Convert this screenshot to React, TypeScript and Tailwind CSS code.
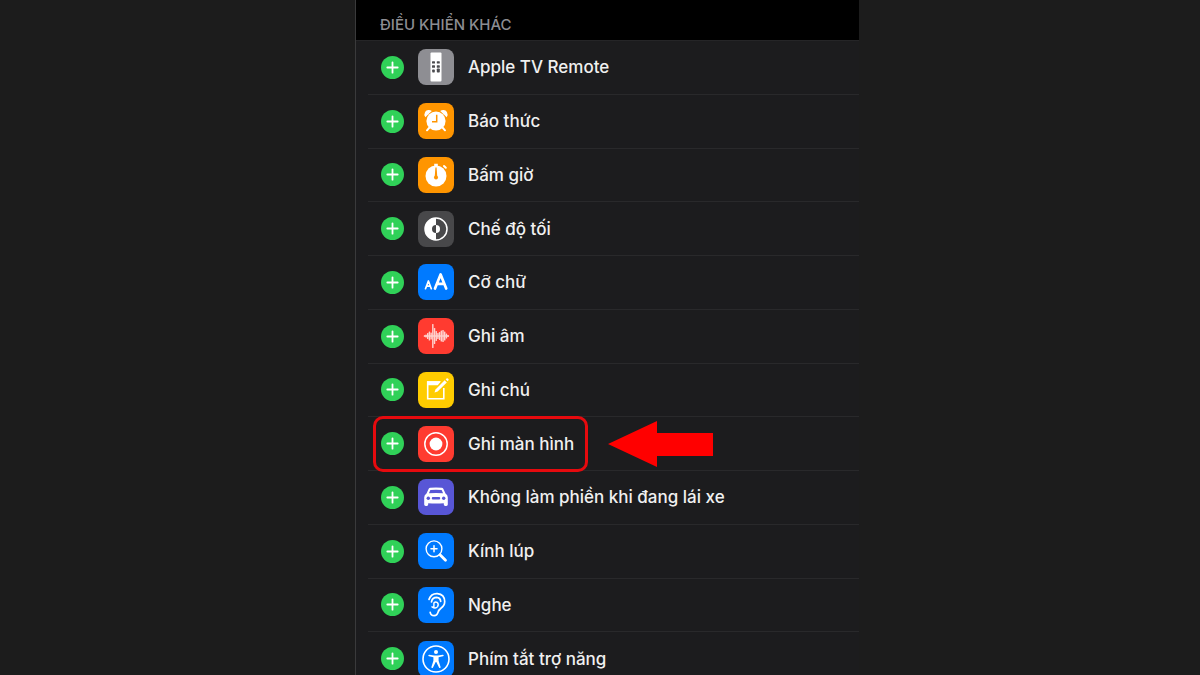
import type { ReactNode } from "react";

function RemoteIcon() {
  return (
    <>
      <rect x="12.500" y="3.500" width="11" height="29" rx="1" fill="#fff" />
      <g fill="#4b4b4f">
        <rect x="14" y="12.200" width="3" height="2.400" rx="0.6" />
        <rect x="18.800" y="12.200" width="3" height="2.400" rx="0.6" />
        <rect x="14" y="16.200" width="3" height="2.600" rx="0.6" />
        <rect x="18.800" y="16.200" width="3" height="2.600" rx="0.6" />
        <rect x="14.200" y="20.600" width="2.600" height="2.800" rx="0.6" />
        <rect x="18.800" y="19.400" width="3" height="4.200" rx="0.8" />
      </g>
    </>
  );
}

function AlarmIcon() {
  return (
    <>
      <g fill="#fff">
        <path d="M7.300 14.200a5 5 0 0 1-.2-5.300a4.400 4.400 0 0 1 6.700-.8z" />
        <path d="M28.700 14.200a5 5 0 0 0 .2-5.300a4.400 4.400 0 0 0-6.700-.8z" />
        <circle cx="18" cy="18" r="9.600" />
      </g>
      <path d="M11.500 24.500L9 27.300M24.500 24.500L27 27.300" stroke="#fff" strokeWidth="2" strokeLinecap="round" />
      <path d="M18.700 11.800V18.700H14" fill="none" stroke="#ff9500" strokeWidth="1.500" />
    </>
  );
}

function TimerIcon() {
  return (
    <>
      <circle cx="18" cy="19" r="10.500" fill="#fff" />
      <path d="M16.200 6.700h3.600v3h-3.600z" fill="#fff" />
      <path d="M26 9l1.800 1.800" stroke="#fff" strokeWidth="2" strokeLinecap="round" />
      <path d="M17.400 10.500h1.200l.7 9.500h-2.600z" fill="#ff9500" />
      <circle cx="18" cy="20.500" r="2" fill="#ff9500" />
    </>
  );
}

function DarkModeIcon() {
  return (
    <>
      <circle cx="18" cy="18" r="11" fill="none" stroke="#fff" strokeWidth="1.500" />
      <path d="M18 7a11 11 0 0 0 0 22v-7a4 4 0 0 1 0-8z" fill="#fff" />
      <path d="M18 14a4 4 0 0 1 0 8z" fill="#fff" />
    </>
  );
}

function TextSizeIcon() {
  return (
    <g fill="none" stroke="#fff" strokeLinejoin="round" strokeLinecap="round">
      <path d="M7.500 24.700l2.900-7.700l2.900 7.700M8.500 22.200h3.900" strokeWidth="1.700" />
      <path d="M17 24.500l5.600-14l5.600 14M18.900 19.900h7.400" strokeWidth="2.700" />
    </g>
  );
}

function VoiceIcon() {
  const bars = [1, 3, 6, 9, 7, 24, 16, 10, 6, 8, 11, 12, 9, 5, 2];
  return (
    <g fill="#ffd2ce">
      {bars.map((height, i) => (
        <rect key={i} x={5.600 + i * 1.700} y={18 - height / 2} width="1.450" height={height} rx="0.6" />
      ))}
      <rect x="6" y="17.300" width="24.500" height="1.400" />
    </g>
  );
}

function NotesIcon() {
  return (
    <>
      <path d="M25.800 16v10.700H9.700V10H22" fill="none" stroke="#fff" strokeWidth="1.600" />
      <path d="M9 9.300h14l-3.300 4H9z" fill="#fff" />
      <path d="M16.500 20.600l1-3.100l9.200-9.200l2.100 2.100l-9.200 9.200z" fill="#fff" />
      <path d="M27.700 7.300l.9-.9q.7-.5 1.600.3t.3 1.600l-.9.900z" fill="#fff" />
    </>
  );
}

function RecordIcon() {
  return (
    <>
      <circle cx="18" cy="18" r="11.200" fill="none" stroke="#fff" strokeWidth="1.500" />
      <circle cx="18" cy="18" r="6.400" fill="#fff" />
    </>
  );
}

function CarIcon() {
  return (
    <>
      <path
        fill="#fff"
        fillRule="evenodd"
        d="M10.700 9.700q.5-.8 1.500-.9q5.800-.6 11.600 0q1 .1 1.500.9l2.200 4.700q2.300 1.300 2.300 4v7.100q0 1.400-1.500 1.400h-1q-1.500 0-1.500-1.400v-1.300q-7.800.5-15.600 0v1.300q0 1.400-1.500 1.400h-1q-1.500 0-1.500-1.400v-7.100q0-2.700 2.300-4zM12.400 11l-1.500 3.300q7.100-.6 14.200 0L23.600 11q-5.600-.6-11.200 0z"
      />
      <g fill="#5856d6">
        <circle cx="10.300" cy="19.300" r="1.700" />
        <circle cx="25.700" cy="19.300" r="1.700" />
        <rect x="13.800" y="18" width="8.400" height="2.600" rx="1.100" />
      </g>
    </>
  );
}

function MagnifierIcon() {
  return (
    <g fill="none" stroke="#fff" strokeLinecap="round">
      <circle cx="16" cy="15.800" r="7.900" strokeWidth="1.400" />
      <path d="M16 12.800v6M13 15.800h6" strokeWidth="1.500" />
      <path d="M22 21.800l5.500 5.500" strokeWidth="2.800" />
    </g>
  );
}

function EarIcon() {
  return (
    <g fill="none" stroke="#fff" strokeWidth="1.700" strokeLinecap="round">
      <path d="M11 12.400q2.200-6.100 8.300-5.800q7.300.7 7.400 7.900q0 4-3.500 6.500q-2.600 1.900-3.300 4.600q-.8 3-3.700 3.100q-3.400 0-4-3.400" />
      <path d="M13.500 14.800q.8-4.400 5.200-4.400q3.600.2 4 4" />
      <path d="M14 19.800q3.500 2.300 5.600-.2q1.500-2.600-.6-4.300q-1.600-1-3.100.6v4.500" strokeWidth="1.400" />
    </g>
  );
}

function AccessibilityIcon() {
  return (
    <>
      <circle cx="18" cy="18" r="13" fill="none" stroke="#fff" strokeWidth="1.600" />
      <circle cx="18" cy="11" r="2" fill="#fff" />
      <path
        d="M11.200 13.800l5 .8h3.600l5-.8q.9 0 .9.700t-.7.800l-4.400 1v3.500l2 6.300q.1.900-.6 1t-1-.5L18.300 21h-.6L15 26.600q-.3.600-1 .5t-.6-1l2-6.300v-3.500l-4.400-1q-.7-.1-.7-.8t.9-.7z"
        fill="#fff"
      />
    </>
  );
}

type Control = { name: string; color: string; icon: ReactNode; highlighted?: boolean };

const controls: Control[] = [
  { name: "Apple TV Remote", color: "bg-[#8e8e93]", icon: <RemoteIcon /> },
  { name: "Báo thức", color: "bg-[#ff9500]", icon: <AlarmIcon /> },
  { name: "Bấm giờ", color: "bg-[#ff9500]", icon: <TimerIcon /> },
  { name: "Chế độ tối", color: "bg-[#48484a]", icon: <DarkModeIcon /> },
  { name: "Cỡ chữ", color: "bg-[#007aff]", icon: <TextSizeIcon /> },
  { name: "Ghi âm", color: "bg-[#ff3b30]", icon: <VoiceIcon /> },
  { name: "Ghi chú", color: "bg-[#ffcc00]", icon: <NotesIcon /> },
  { name: "Ghi màn hình", color: "bg-[#ff3b30]", icon: <RecordIcon />, highlighted: true },
  { name: "Không làm phiền khi đang lái xe", color: "bg-[#5856d6]", icon: <CarIcon /> },
  { name: "Kính lúp", color: "bg-[#007aff]", icon: <MagnifierIcon /> },
  { name: "Nghe", color: "bg-[#007aff]", icon: <EarIcon /> },
  { name: "Phím tắt trợ năng", color: "bg-[#007aff]", icon: <AccessibilityIcon /> },
];

function Callout() {
  return (
    <>
      <div className="pointer-events-none absolute -top-px -bottom-px left-[17px] w-[215px] rounded-[10px] border-3 border-[#e60a0e]" />
      <svg className="pointer-events-none absolute top-1 left-[252px] h-[46px] w-[105px]" viewBox="0 0 105 46" aria-hidden="true">
        <path d="M0 23L49 0V12H105V35H49V46Z" fill="#ff0000" />
      </svg>
    </>
  );
}

function ControlRow({ name, color, icon, highlighted }: Control) {
  const id = name.replace(/\s+/g, "-");
  return (
    <li className="relative flex flex-col pl-3">
      <div className="flex flex-1 items-center gap-3.5 border-b border-[#29292b] pl-[13px]">
        <button type="button" aria-labelledby={id} className="size-[23px] shrink-0 cursor-pointer rounded-full bg-[#30d158]">
          <svg viewBox="0 0 23 23" aria-hidden="true">
            <path d="M11.500 6.300v10.400M6.300 11.500h10.400" stroke="#fff" strokeWidth="1.800" strokeLinecap="round" />
          </svg>
        </button>
        <svg viewBox="0 0 36 36" className={`size-9 shrink-0 rounded-lg ${color}`} aria-hidden="true">
          {icon}
        </svg>
        <span id={id} className="text-[17px] leading-6 font-medium text-[#f0f0f0]">
          {name}
        </span>
      </div>
      {highlighted && <Callout />}
    </li>
  );
}

export default function App() {
  return (
    <div className="flex h-screen justify-center overflow-hidden bg-[#1c1c1c] pl-3.5 font-['Inter','Liberation_Sans',sans-serif]">
      <main className="w-full max-w-[504px] border-l border-[#3a3a3b] bg-[#1c1c1e]">
        <h2 className="border-b border-[#252527] bg-black pt-[15px] pb-[5px] pl-6 text-[15px] leading-5 font-medium text-[#8d8d92]">
          ĐIỀU KHIỂN KHÁC
        </h2>
        <ul className="grid h-[645px] grid-rows-12">
          {controls.map((control) => (
            <ControlRow key={control.name} {...control} />
          ))}
        </ul>
      </main>
    </div>
  );
}
